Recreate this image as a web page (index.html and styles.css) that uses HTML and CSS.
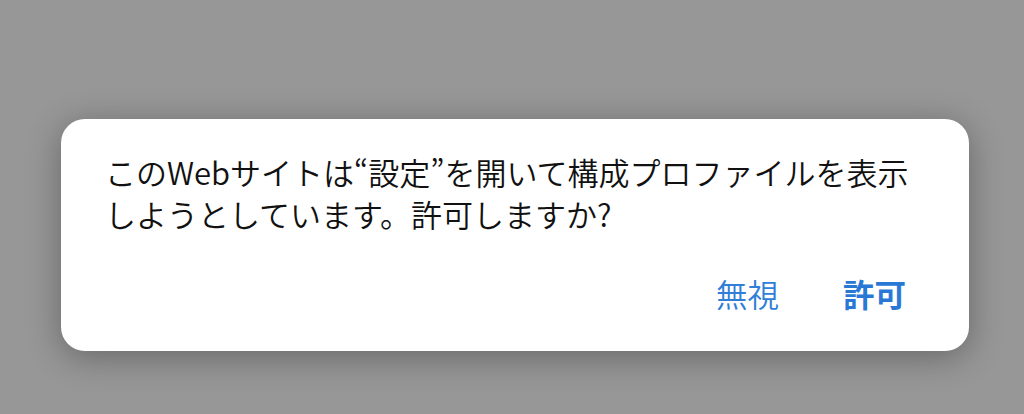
FILE: index.html
```html
<!DOCTYPE html>
<html lang="ja">
<head>
<meta charset="utf-8">
<link rel="stylesheet" href="styles.css">
</head>
<body>
<div class="screen">
  <div class="dialog">
    <p class="message">このWebサイトは“設定”を開いて構成プロファイルを表示しようとしています。許可しますか?</p>
    <div class="actions">
      <span class="btn">無視</span>
      <span class="btn primary">許可</span>
    </div>
  </div>
</div>
</body>
</html>
```
FILE: styles.css
```css
html, body {
  margin: 0;
  padding: 0;
}
body {
  width: 1024px;
  height: 414px;
  overflow: hidden;
  background: #979797;
  font-family: "Noto Sans CJK JP", "Noto Sans", sans-serif;
}
.screen {
  height: 414px;
  padding: 119px 55px 0 61px;
  box-sizing: border-box;
}
.dialog {
  width: 908px;
  height: 232px;
  box-sizing: border-box;
  background: #ffffff;
  border-radius: 24px;
  box-shadow: 0 6px 34px rgba(0, 0, 0, 0.32);
  padding: 32px 50px 0 44px;
}
.message {
  margin: 0;
  font-size: 31px;
  font-weight: 350;
  line-height: 42px;
  color: #111111;
}
.actions {
  display: flex;
  justify-content: flex-end;
  gap: 64px;
  margin-top: 38px;
  padding-right: 13px;
}
.btn {
  font-size: 31.5px;
  line-height: 40px;
  font-weight: 350;
  color: #2f7ed8;
}
.btn.primary {
  font-weight: bold;
  color: #2a78d6;
}
```
